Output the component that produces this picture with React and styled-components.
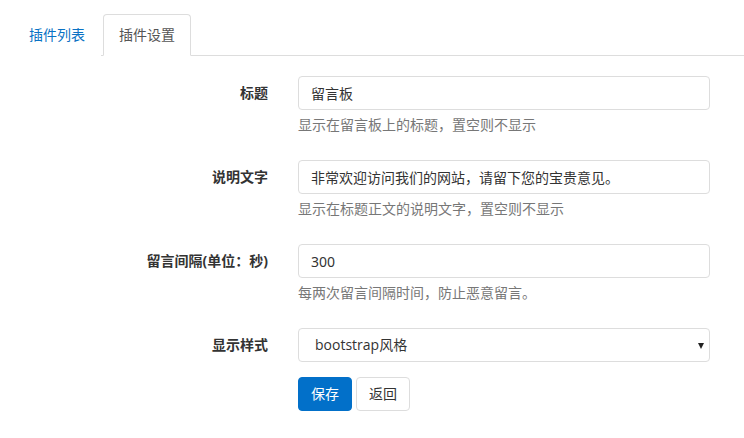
import React from "react";
import styled, { createGlobalStyle } from "styled-components";

const Global = createGlobalStyle`
  html, body { margin: 0; padding: 0; background: #fff; }
  body {
    font-family: "Noto Sans", "Noto Sans CJK SC", sans-serif;
    font-size: 14px;
    color: #333;
  }
  * { box-sizing: border-box; }
`;

const Page = styled.div`
  padding: 14px 0 0 13px;
  width: 744px;
`;

const Tabs = styled.ul`
  display: flex;
  list-style: none;
  margin: 0;
  padding: 0;
  border-bottom: 1px solid #ddd;
`;

const Tab = styled.li`
  margin-right: 2px;
  margin-bottom: -1px;
  padding: 10px 15px;
  line-height: 20px;
  border: 1px solid ${(p) => (p.$active ? "#ddd" : "transparent")};
  border-bottom-color: ${(p) => (p.$active ? "#fff" : "transparent")};
  border-radius: 4px 4px 0 0;
  background: #fff;
  color: ${(p) => (p.$active ? "#555" : "#0a72c4")};
`;

const Form = styled.form`
  display: grid;
  grid-template-columns: 255px 412px;
  column-gap: 30px;
  margin-top: 20px;
`;

const Label = styled.label`
  font-weight: 700;
  text-align: right;
  line-height: 20px;
  padding-top: 7px;
  color: #333;
`;

const Field = styled.div`
  display: flex;
  flex-direction: column;
  margin-bottom: 15px;
`;

const Input = styled.input`
  height: 34px;
  width: 100%;
  padding: 6px 12px;
  font: inherit;
  font-size: 14px;
  color: #333;
  border: 1px solid #ddd;
  border-radius: 4px;
  outline: none;
`;

const SelectBox = styled.div`
  position: relative;
  height: 34px;
  width: 100%;
  border: 1px solid #ddd;
  border-radius: 4px;
  padding: 6px 16px;
  line-height: 20px;
  font-family: "Open Sans", "Noto Sans CJK SC", sans-serif;
  color: #333;
`;

const Caret = styled.span`
  position: absolute;
  right: 5px;
  top: 14px;
  width: 0;
  height: 0;
  border-left: 3.5px solid transparent;
  border-right: 3.5px solid transparent;
  border-top: 6px solid #222;
`;

const Help = styled.div`
  margin: 5px 0 10px;
  line-height: 20px;
  color: #777;
`;

const Actions = styled.div`
  display: flex;
  gap: 4px;
`;

const Button = styled.button`
  height: 34px;
  padding: 6px 12px;
  font: inherit;
  font-size: 14px;
  line-height: 20px;
  border-radius: 4px;
  border: 1px solid ${(p) => (p.$primary ? "#0270c9" : "#ddd")};
  background: ${(p) => (p.$primary ? "#0270c9" : "#fff")};
  color: ${(p) => (p.$primary ? "#fff" : "#333")};
`;

const rows = [
  { label: "标题", value: "留言板", help: "显示在留言板上的标题，置空则不显示" },
  {
    label: "说明文字",
    value: "非常欢迎访问我们的网站，请留下您的宝贵意见。",
    help: "显示在标题正文的说明文字，置空则不显示",
  },
  { label: "留言间隔(单位：秒)", value: "300", help: "每两次留言间隔时间，防止恶意留言。" },
];

export default function App() {
  return (
    <>
      <Global />
      <Page>
        <Tabs>
          <Tab>插件列表</Tab>
          <Tab $active>插件设置</Tab>
        </Tabs>
        <Form onSubmit={(e) => e.preventDefault()}>
          {rows.map((r) => (
            <React.Fragment key={r.label}>
              <Label>{r.label}</Label>
              <Field>
                <Input defaultValue={r.value} />
                <Help>{r.help}</Help>
              </Field>
            </React.Fragment>
          ))}
          <Label>显示样式</Label>
          <Field>
            <SelectBox>
              bootstrap风格
              <Caret />
            </SelectBox>
          </Field>
          <div />
          <Actions>
            <Button type="button" $primary>保存</Button>
            <Button type="button">返回</Button>
          </Actions>
        </Form>
      </Page>
    </>
  );
}
